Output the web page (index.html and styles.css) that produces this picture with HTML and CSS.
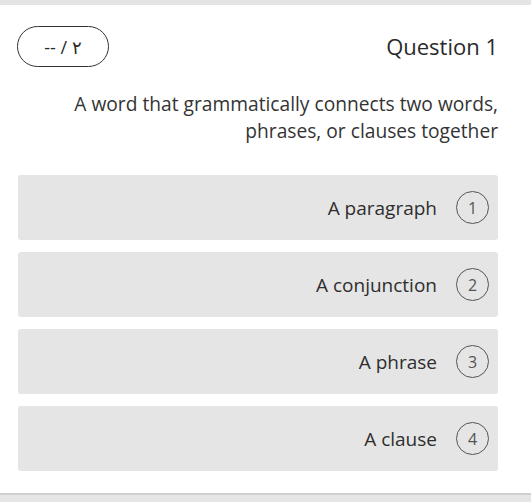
FILE: index.html
```html
<!DOCTYPE html>
<html>
<head>
<meta charset="utf-8">
<link rel="stylesheet" href="styles.css">
</head>
<body>
<div class="topbar"></div>
<div class="page">
  <div class="header">
    <div class="pill">-- / ٢</div>
    <div class="title">Question 1</div>
  </div>
  <div class="desc">A word that grammatically connects two words,<br>phrases, or clauses together</div>
  <div class="options">
    <div class="option"><span class="label">A paragraph</span><span class="num">1</span></div>
    <div class="option"><span class="label">A conjunction</span><span class="num">2</span></div>
    <div class="option"><span class="label">A phrase</span><span class="num">3</span></div>
    <div class="option"><span class="label">A clause</span><span class="num">4</span></div>
  </div>
</div>
<div class="bottombar"></div>
</body>
</html>
```
FILE: styles.css
```css
html, body {
  margin: 0;
  padding: 0;
  background: #fff;
  font-family: "Open Sans", "Noto Sans", sans-serif;
  color: #333;
  height: 502px;
  overflow: hidden;
}
body {
  display: flex;
  flex-direction: column;
}
.topbar {
  height: 5px;
  background: #e4e4e4;
}
.page {
  flex: 1;
  padding: 21px 33px 0 17px;
}
.header {
  display: flex;
  justify-content: space-between;
  align-items: center;
}
.pill {
  width: 90px;
  height: 39px;
  border: 1.5px solid #333;
  border-radius: 21px;
  display: flex;
  align-items: center;
  justify-content: center;
  font-size: 18px;
  color: #2a2a2a;
  box-sizing: content-box;
}
.title {
  font-size: 22px;
  color: #2a2a2a;
  margin-top: -1px;
}
.desc {
  margin-top: 23px;
  text-align: right;
  font-size: 19.2px;
  line-height: 27px;
  color: #333;
}
.options {
  margin-top: 31px;
  margin-left: 1px;
  display: flex;
  flex-direction: column;
  gap: 12px;
}
.option {
  height: 65px;
  background: #e5e5e5;
  border-radius: 3px;
  display: flex;
  align-items: center;
  justify-content: flex-end;
  padding-right: 9px;
  gap: 19px;
}
.label {
  font-size: 19px;
  color: #2e2e2e;
}
.num {
  width: 31px;
  height: 31px;
  border: 1.3px solid #555;
  border-radius: 50%;
  display: flex;
  align-items: center;
  justify-content: center;
  font-size: 16px;
  color: #555;
}
.bottombar {
  height: 7px;
  background: #e5e5e5;
  border-top: 2px solid #d0d0d0;
}
```
